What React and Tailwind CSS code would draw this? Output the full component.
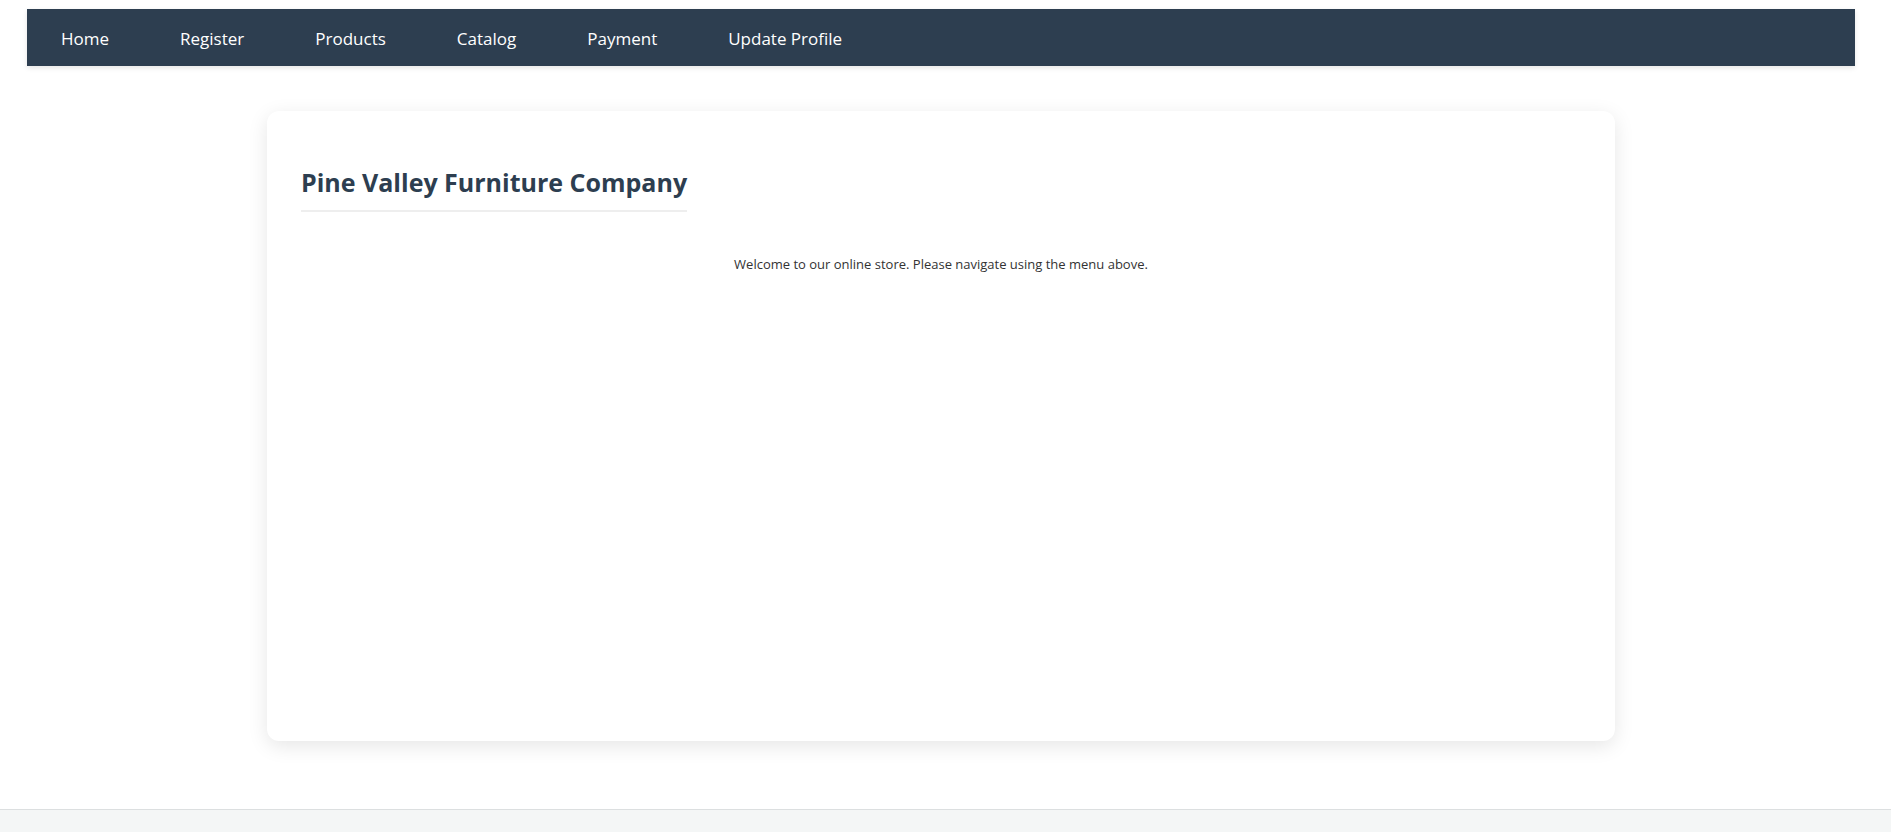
import React from 'react';

const NAV_LINKS = [
  { label: 'Home', href: '#home' },
  { label: 'Register', href: '#register' },
  { label: 'Products', href: '#products' },
  { label: 'Catalog', href: '#catalog' },
  { label: 'Payment', href: '#payment' },
  { label: 'Update Profile', href: '#profile' },
];

function NavBar() {
  return (
    <nav className="mt-[9px] ml-[27px] mr-9 bg-[#2d3e50] shadow-[0_2px_5px_rgba(0,0,0,0.1)]">
      <ul className="flex flex-wrap gap-x-[71px] px-[34px] pt-[17px] pb-[15px]">
        {NAV_LINKS.map((link) => (
          <li key={link.label}>
            <a href={link.href} className="block text-[17px] leading-[25px] text-white hover:underline">
              {link.label}
            </a>
          </li>
        ))}
      </ul>
    </nav>
  );
}

export default function App() {
  return (
    <div className="flex min-h-screen flex-col bg-white font-['Open_Sans','Noto_Sans',sans-serif] text-[#333333]">
      <NavBar />

      {/* Main card */}
      <main className="mt-[45px] mb-[68px] ml-[267px] mr-[276px] flex flex-1 flex-col items-start rounded-xl bg-white px-[34px] pt-[53px] pb-9 shadow-[0_5px_20px_rgba(0,0,0,0.1)]">
        <h1 className="border-b-2 border-[#eeeeee] pb-[10px] text-[25px] leading-9 font-bold text-[#2d3e50]">
          Pine Valley Furniture Company
        </h1>
        <p className="mt-10 self-center text-[13px] leading-6">
          Welcome to our online store. Please navigate using the menu above.
        </p>
      </main>

      <footer className="h-[23px] border-t border-[#dcdfe0] bg-[#f4f6f6]" />
    </div>
  );
}
